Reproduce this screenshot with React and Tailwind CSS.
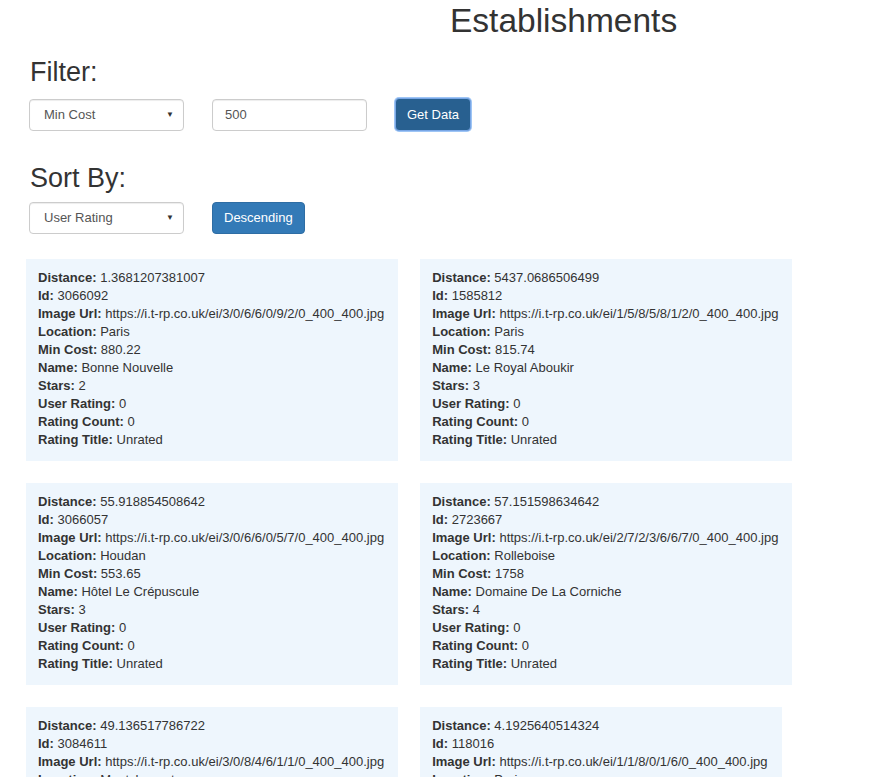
import React from 'react';

const establishments = [
  { distance: '1.3681207381007', id: '3066092', url: 'https://i.t-rp.co.uk/ei/3/0/6/6/0/9/2/0_400_400.jpg', location: 'Paris', minCost: '880.22', name: 'Bonne Nouvelle', stars: '2' },
  { distance: '5437.0686506499', id: '1585812', url: 'https://i.t-rp.co.uk/ei/1/5/8/5/8/1/2/0_400_400.jpg', location: 'Paris', minCost: '815.74', name: 'Le Royal Aboukir', stars: '3' },
  { distance: '55.918854508642', id: '3066057', url: 'https://i.t-rp.co.uk/ei/3/0/6/6/0/5/7/0_400_400.jpg', location: 'Houdan', minCost: '553.65', name: 'Hôtel Le Crépuscule', stars: '3' },
  { distance: '57.151598634642', id: '2723667', url: 'https://i.t-rp.co.uk/ei/2/7/2/3/6/6/7/0_400_400.jpg', location: 'Rolleboise', minCost: '1758', name: 'Domaine De La Corniche', stars: '4' },
  { distance: '49.136517786722', id: '3084611', url: 'https://i.t-rp.co.uk/ei/3/0/8/4/6/1/1/0_400_400.jpg', location: 'Montchauvet', minCost: '612.5', name: 'Le Clos', stars: '3' },
  { distance: '4.1925640514324', id: '118016', url: 'https://i.t-rp.co.uk/ei/1/1/8/0/1/6/0_400_400.jpg', location: 'Paris', minCost: '702.1', name: 'Hôtel Paris', stars: '3' },
];

const Select = ({ value }) => (
  <div className="w-[155px] h-[32px] border border-[#ccc] rounded-[4px] bg-white flex items-center justify-between pl-[14px] pr-[9px] text-[13px] text-[#555] shadow-[inset_0_1px_1px_rgba(0,0,0,0.075)]">
    <span>{value}</span>
    <span className="text-[8px] text-[#333]">▼</span>
  </div>
);

const Row = ({ label, value }) => (
  <div>
    <span className="font-bold">{label}:</span> {value}
  </div>
);

const App = () => {
  return (
    <div className="min-h-screen bg-white text-[#333] font-['Liberation_Sans',Arial,sans-serif] overflow-hidden">
      {/* header */}
      <h1 className="pl-[450px] pt-[1px] text-[33.5px] leading-[40px] font-normal whitespace-nowrap">Establishments</h1>

      {/* filter */}
      <div className="pl-[29px] mt-[16px]">
        <h2 className="text-[27px] leading-[30px] font-normal pl-[1px]">Filter:</h2>
        <div className="flex items-center mt-[11px] gap-[28px]">
          <Select value="Min Cost" />
          <div className="w-[155px] h-[32px] border border-[#ccc] rounded-[4px] flex items-center pl-[12px] text-[13px] text-[#555] shadow-[inset_0_1px_1px_rgba(0,0,0,0.075)]">500</div>
          <button className="h-[33px] px-[11px] rounded-[4px] bg-[#286090] border border-[#7aa7e6] text-white text-[13px] ring-1 ring-[#9ec5f5]">Get Data</button>
        </div>

        <h2 className="text-[27px] leading-[30px] font-normal pl-[1px] mt-[32px]">Sort By:</h2>
        <div className="flex items-center mt-[9px] gap-[28px]">
          <Select value="User Rating" />
          <button className="h-[32px] px-[11px] rounded-[4px] bg-[#337ab7] border border-[#2e6da4] text-white text-[13px]">Descending</button>
        </div>
      </div>

      {/* results */}
      <div className="flex flex-wrap gap-[22px] pl-[26px] mt-[25px] w-[840px]">
        {establishments.map((e) => (
          <div key={e.id} className="bg-[#eef6fd] pl-[12px] pr-[14px] pt-[10px] pb-[12px] text-[13px] leading-[18px] whitespace-nowrap">
            <Row label="Distance" value={e.distance} />
            <Row label="Id" value={e.id} />
            <Row label="Image Url" value={e.url} />
            <Row label="Location" value={e.location} />
            <Row label="Min Cost" value={e.minCost} />
            <Row label="Name" value={e.name} />
            <Row label="Stars" value={e.stars} />
            <Row label="User Rating" value="0" />
            <Row label="Rating Count" value="0" />
            <Row label="Rating Title" value="Unrated" />
          </div>
        ))}
      </div>
    </div>
  );
};

export default App;
